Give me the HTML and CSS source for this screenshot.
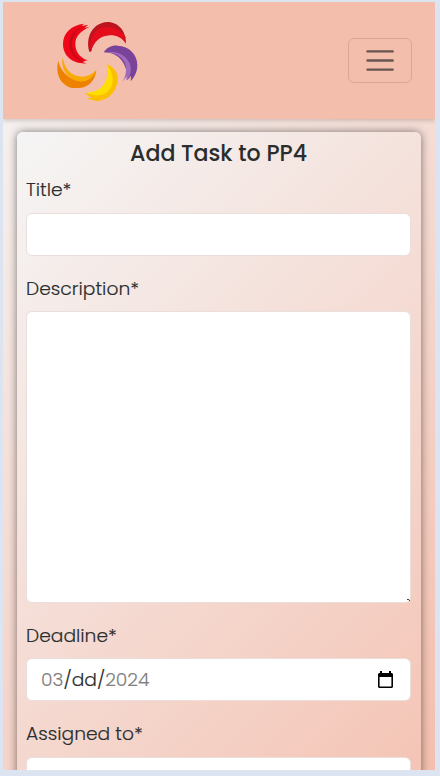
FILE: index.html
```html
<!DOCTYPE html>
<html lang="en">
<head>
<meta charset="utf-8">
<title>Add Task</title>
<link rel="stylesheet" href="styles.css">
</head>
<body>
<div class="page">
  <header class="navbar">
    <svg class="logo" viewBox="0 0 315 300" aria-hidden="true">
      <path fill="#ef0718" d="M117 41C80 45 54 68 54 102C54 140 86 163 125 160L110 155L128 151C102 142 91 123 91 101C91 80 108 62 133 51L118 53L130 44L110 48Z"/>
      <path fill="#c90a1b" d="M117 49C87 58 71 78 72 105C74 129 88 147 110 155L119 156C94 145 81 124 81 101C82 78 96 60 117 49Z"/>
      <path fill="#bd1520" d="M133 125C121 83 141 39 187 36C221 36 244 65 243 101C233 82 216 74 195 74C164 76 145 96 138 125Z"/>
      <path fill="#e50c1b" d="M138 125C130 82 150 53 185 51C214 50 234 70 244 84L236 82L243 101C230 82 213 75 195 76C164 77 145 96 138 125Z"/>
      <path fill="#79439a" d="M176 127C187 111 202 105 218 107C253 108 277 134 277 165C277 186 268 202 257 214L258 197L247 211C248 165 225 127 176 127Z"/>
      <path fill="#a06abd" d="M178 127C220 119 252 141 257 171C259 188 253 203 244 212L245 199L232 216C247 190 247 163 232 147C219 133 202 126 178 127Z"/>
      <path fill="#fac000" d="M185 163C211 172 221 194 218 216C212 248 186 274 153 273L122 265L140 264L119 250C168 259 199 216 185 163Z"/>
      <path fill="#ffdf00" d="M185 163C209 193 209 226 187 246C168 262 143 258 124 247C167 249 197 216 185 163Z"/>
      <path fill="#ee8200" d="M40 152C45 178 68 210 105 211C129 211 144 199 154 180C151 210 132 232 103 234L80 234C45 224 30 188 40 152Z"/>
      <path fill="#f8aa05" d="M54 141C56 175 78 198 109 200C129 200 143 191 154 180C145 204 126 218 101 214C68 208 44 174 54 141Z"/>
    </svg>
    <button class="toggler" aria-label="Menu">
      <svg viewBox="0 0 30 30"><path stroke="#685650" stroke-linecap="round" stroke-width="2.3" d="M2.4 6.2h24.4M2.4 15h24.4M2.4 23.8h24.4"/></svg>
    </button>
  </header>
  <main class="card">
    <h1>Add Task to PP4</h1>
    <div class="field"><label>Title*</label><div class="control"></div></div>
    <div class="field"><label>Description*</label><div class="control area"><svg class="grip" viewBox="0 0 3 3"><path fill="#444" d="M0 0h2v1H0zM2 1h1v1H2z"/></svg></div></div>
    <div class="field"><label>Deadline*</label>
      <div class="control date"><span><i>03</i>/dd/<i>2024</i></span>
        <svg class="calendar" viewBox="0 0 15 17"><path fill="#000" fill-rule="evenodd" d="M2 0h2v2h7V0h2v2h1l1 1v13l-1 1H1l-1-1V3l1-1h1zM1.6 6v9.4h11.8V6z"/></svg>
      </div>
    </div>
    <div class="field"><label>Assigned to*</label><div class="control"></div></div>
  </main>
</div>
</body>
</html>
```
FILE: styles.css
```css
* { box-sizing: border-box; }
body {
  margin: 0;
  height: 776px;
  overflow: hidden;
  padding: 2px 5px 6px 3px;
  background: #dce4f1;
  font-family: Poppins, Inter, sans-serif;
  color: #292d2d;
}
.page {
  height: 768px;
  overflow: hidden;
  background: linear-gradient(135deg, #f5f5f5 0%, #f4bfae 100%);
}
.navbar {
  height: 117px;
  display: flex;
  justify-content: space-between;
  align-items: flex-start;
  padding: 8px 23px 0 42px;
  background: #f4beac;
  box-shadow: 0 2px 4px rgba(0, 0, 0, .16);
}
.logo { width: 105px; height: 100px; }
.toggler {
  width: 64px;
  height: 45px;
  margin-top: 28px;
  padding: 0;
  display: flex;
  align-items: center;
  justify-content: center;
  border: 1px solid #d9a798;
  border-radius: 6px;
  background: none;
}
.toggler svg { width: 31px; height: 31px; fill: none; }
.card {
  width: 404px;
  height: 760px;
  margin: 13px 0 0 14px;
  padding: 6px 10px 6px 9px;
  border-radius: 6px;
  background: linear-gradient(135deg, #f5f5f5 0%, #f4bfae 100%);
  box-shadow: 0 0 9px rgba(0, 0, 0, .5);
}
h1 {
  margin: 0 0 6px;
  font-size: 22.1px;
  font-weight: 500;
  line-height: 32px;
  text-align: center;
  white-space: nowrap;
}
.field { margin-bottom: 19.2px; }
label {
  display: block;
  margin-bottom: 9.5px;
  font-size: 18.7px;
  font-weight: 300;
  line-height: 27px;
  -webkit-text-stroke: .15px currentColor;
}
.control {
  height: 43px;
  border: 1px solid #eadfdc;
  border-radius: 6px;
  background: #fff;
}
.area {
  height: 291.4px;
  display: flex;
  align-items: flex-end;
  justify-content: flex-end;
}
.area + .field { margin-top: 0; }
.grip { width: 3px; height: 3px; }
.date {
  display: flex;
  align-items: center;
  justify-content: space-between;
  padding: 0 17px 0 14px;
  font-size: 18.7px;
  font-weight: 300;
  -webkit-text-stroke: .15px currentColor;
}
.date i { font-style: normal; color: #808080; }
.calendar { width: 15px; height: 17px; }
```
